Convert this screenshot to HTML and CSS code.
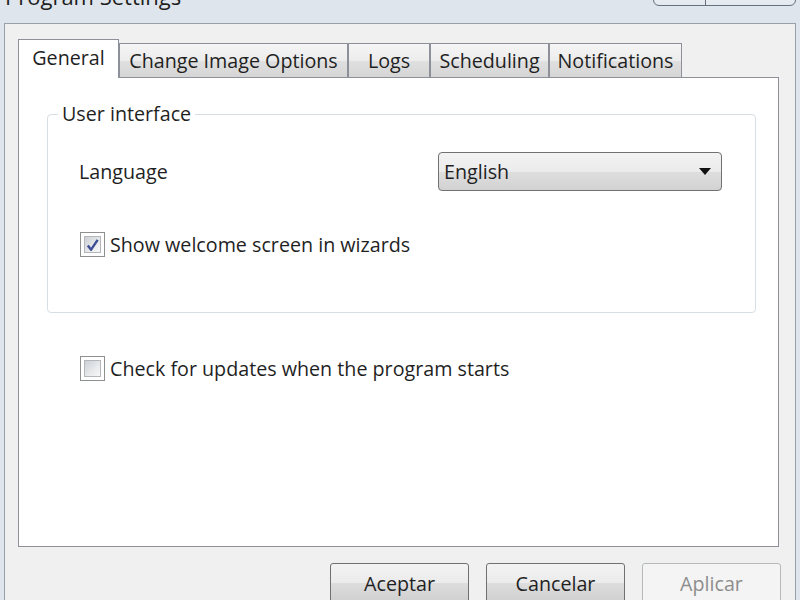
FILE: index.html
```html
<!DOCTYPE html>
<html>
<head>
<meta charset="utf-8">
<title>Program Settings</title>
<link rel="stylesheet" href="styles.css">
</head>
<body>
<div class="window">
  <div class="titlebar">
    <div class="title">Program Settings</div>
    <div class="caption-btns"><span class="cap cap-help"></span><span class="cap cap-close"></span></div>
  </div>
  <div class="client">
    <div class="tabs">
      <div class="tab active w-general">General</div>
      <div class="tab w-change">Change Image Options</div>
      <div class="tab w-logs">Logs</div>
      <div class="tab w-sched">Scheduling</div>
      <div class="tab w-notif">Notifications</div>
    </div>
    <div class="panel">
      <fieldset class="group">
        <legend>User interface</legend>
        <div class="group-body">
          <div class="lang-row">
            <span class="label">Language</span>
            <div class="select">
              <span>English</span>
              <svg class="arrow" width="12" height="7" viewBox="0 0 12 7"><path d="M0 0H12L6 7Z" fill="#111"/></svg>
            </div>
          </div>
          <div class="check welcome">
            <span class="box"><span class="inner"><svg class="tick" width="16" height="16" viewBox="0 0 16 16"><path d="M3 8.5L6.5 13L13.5 2.5" fill="none" stroke="#3f4f96" stroke-width="2.6" stroke-linejoin="round"/></svg></span></span>
            <span>Show welcome screen in wizards</span>
          </div>
        </div>
      </fieldset>
      <div class="check updates">
        <span class="box"><span class="inner"></span></span>
        <span>Check for updates when the program starts</span>
      </div>
    </div>
    <div class="buttons">
      <button class="btn">Aceptar</button>
      <button class="btn">Cancelar</button>
      <button class="btn" disabled>Aplicar</button>
    </div>
  </div>
</div>
</body>
</html>
```

FILE: styles.css
```css
* { box-sizing: border-box; }
html, body {
  margin: 0;
  height: 600px;
  overflow: hidden;
}
body {
  background: #dfe5ec;
  font-family: "Open Sans", "Noto Sans", sans-serif;
  font-size: 19.7px;
  color: #1f1f1f;
}
.titlebar {
  height: 23px;
  display: flex;
  justify-content: space-between;
  align-items: flex-start;
  padding: 0 4px 0 5px;
  overflow: hidden;
}
.title {
  margin-top: -17px;
  font-size: 22px;
  line-height: 26px;
  color: #1e1e1e;
}
.caption-btns {
  display: flex;
  height: 18px;
  margin-top: -12px;
  border: 1px solid #66717d;
  border-radius: 0 0 6px 6px;
  background: linear-gradient(#eef2f6, #e3e9ef);
  overflow: hidden;
}
.cap { display: block; height: 100%; }
.cap-help { width: 52px; border-right: 1px solid #66717d; }
.cap-close { width: 89px; }
.client {
  margin: 0 4px;
  height: 600px;
  border: 1px solid #98a0a9;
  background: #f0f0f0;
  padding: 15px 16px 0 13px;
}
.tabs {
  display: flex;
  align-items: flex-end;
  height: 38px;
}
.tab {
  height: 34px;
  border: 1px solid #8d9098;
  border-bottom: none;
  display: flex;
  align-items: center;
  justify-content: center;
  white-space: nowrap;
  background: linear-gradient(#f5f5f5 0%, #ececec 50%, #e0e0e0 51%, #d5d5d5 100%);
}
.tab.active {
  height: 39px;
  margin-bottom: -1px;
  position: relative;
  z-index: 1;
  background: #fff;
  padding-bottom: 3px;
}
.w-general { width: 101px; }
.w-change { width: 229px; }
.w-logs { width: 82px; }
.w-sched { width: 119px; }
.w-notif { width: 133px; }
.panel {
  height: 470px;
  background: #fff;
  border: 1px solid #8d9098;
  padding: 24px 22px 0 28px;
}
.group {
  margin: 0;
  padding: 0;
  border: 1px solid #d8dfe4;
  border-radius: 4px;
  min-width: 0;
}
.group legend {
  margin-left: 10px;
  padding: 0 4px;
  line-height: 24px;
}
.group-body {
  padding: 26px 33px 55px 31px;
}
.lang-row {
  display: flex;
  align-items: center;
  height: 39px;
}
.select {
  margin-left: auto;
  width: 284px;
  height: 39px;
  border: 1px solid #717171;
  border-radius: 4px;
  background: linear-gradient(#f3f3f3 0%, #ebebeb 50%, #dedede 51%, #d2d2d2 100%);
  display: flex;
  align-items: center;
  justify-content: space-between;
  padding: 0 10px 0 5px;
}
.arrow { display: block; }
.check {
  display: flex;
  align-items: center;
  gap: 5px;
  height: 25px;
}
.welcome { margin-top: 41px; margin-left: 1px; }
.updates { margin-top: 43px; margin-left: 33px; }
.box {
  width: 25px;
  height: 25px;
  border: 1px solid #8e8f8f;
  background: #fff;
  padding: 3px;
  flex: none;
}
.inner {
  display: flex;
  align-items: center;
  justify-content: center;
  width: 100%;
  height: 100%;
  border: 1px solid #b3b7bc;
  background: linear-gradient(135deg, #ccd0d5 0%, #e6e8ea 55%, #f8f8f8 100%);
}
.tick { display: block; }
.buttons {
  display: flex;
  justify-content: flex-end;
  gap: 17px;
  margin-top: 16px;
  margin-right: -2px;
}
.btn {
  width: 139px;
  height: 40px;
  border: 1px solid #707070;
  border-radius: 3px;
  background: linear-gradient(#f3f3f3 0%, #ebebeb 50%, #dddddd 51%, #cfcfcf 100%);
  font-family: inherit;
  font-size: 19.7px;
  color: #1f1f1f;
  padding: 0;
}
.btn:disabled {
  border-color: #b5b9bc;
  background: #f4f4f4;
  color: #8d8d8d;
}
```
